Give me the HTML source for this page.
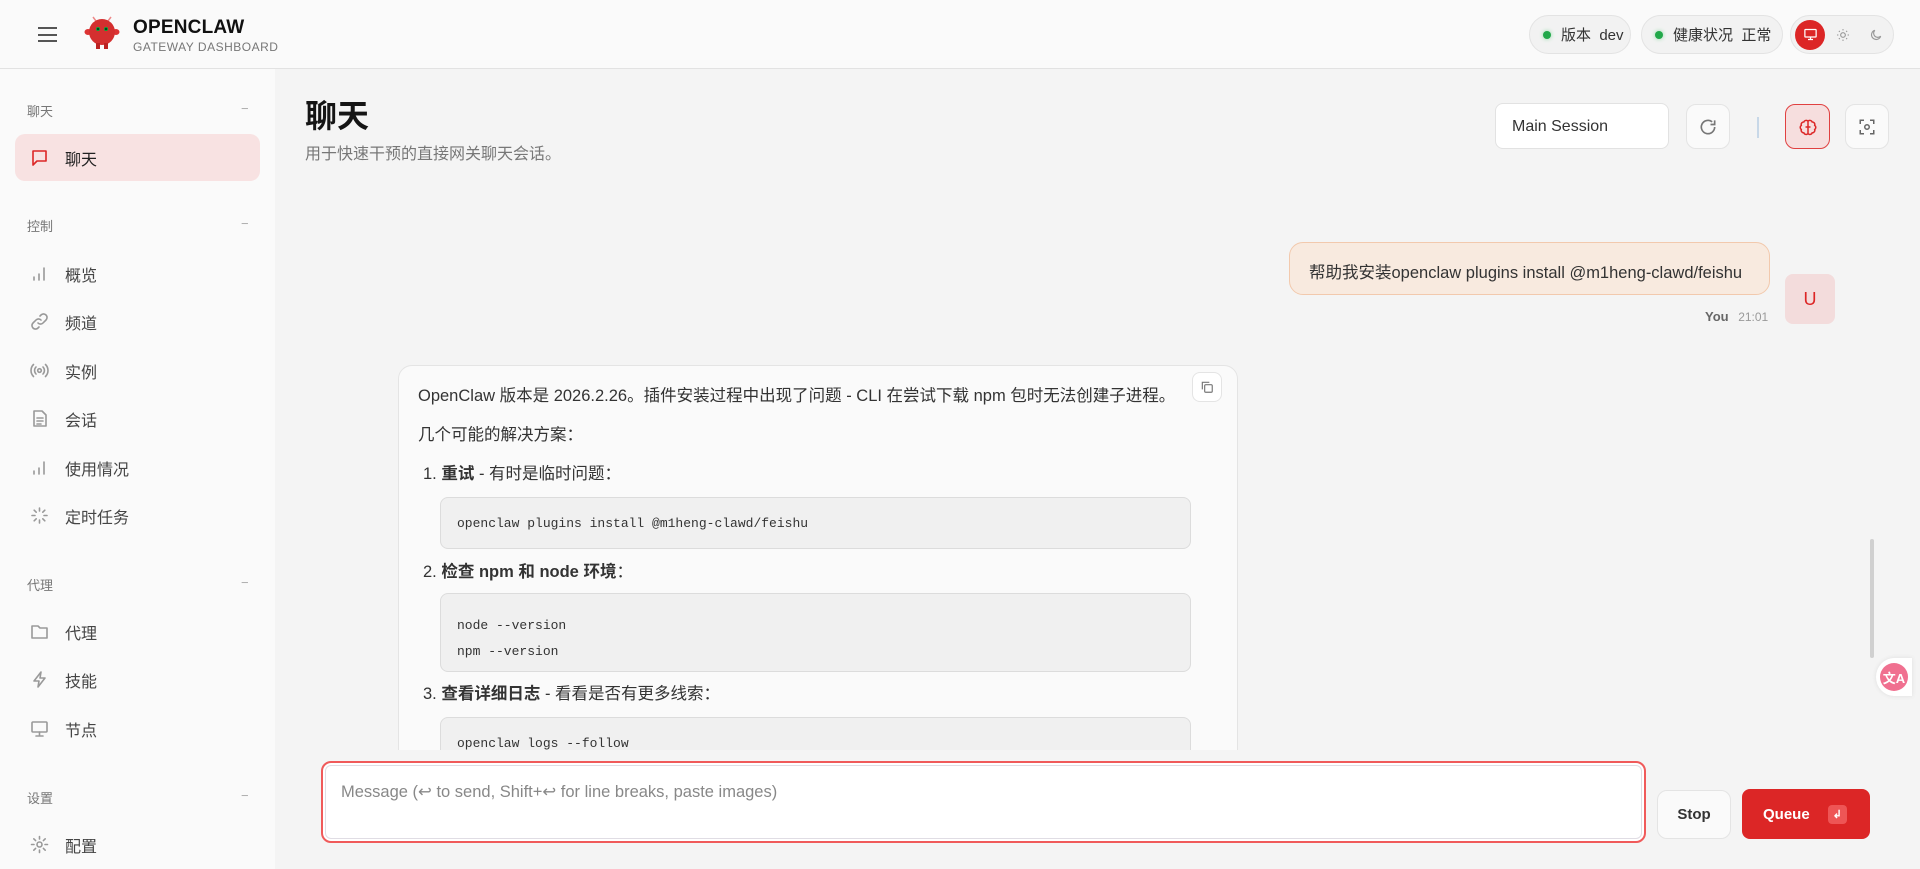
<!DOCTYPE html>
<html><head><meta charset="utf-8"><style>
*{box-sizing:border-box;margin:0;padding:0}
body{width:1920px;height:869px;overflow:hidden;background:#f4f4f4;font-family:"Liberation Sans","Noto Sans CJK SC",sans-serif;color:#222;position:relative}
.a{position:absolute}
.hdr{left:0;top:0;width:1920px;height:69px;background:#fafafa;border-bottom:1px solid #e2e2e2}
.side{left:0;top:69px;width:275px;height:800px;background:#fafafa}
.lbl{position:absolute;left:27px;font-size:13px;color:#777}
.lbl i{position:absolute;left:214px;font-style:normal;color:#aaa}
.it{position:absolute;left:15px;width:245px;height:47px;display:flex;align-items:center;font-size:16px;color:#444}
.it svg{margin-left:15px;margin-right:16px;width:19px;height:19px;fill:none;stroke:#999;stroke-width:1.6;stroke-linecap:round;stroke-linejoin:round}
.pill{top:15px;height:39px;border:1px solid #e3e3e3;border-radius:20px;background:#f2f2f2;display:flex;align-items:center;font-size:15px;color:#333}
.dot{width:8px;height:8px;border-radius:50%;background:#22a84a;margin:0 10px 0 13px;box-shadow:0 0 4px #8fd8a4}
.btn{background:#fafafa;border:1px solid #e4e4e4;border-radius:10px;display:flex;align-items:center;justify-content:center}
.code{position:absolute;left:440px;width:751px;background:#f0f0f0;border:1px solid #dcdcdc;border-radius:8px;font-family:"Liberation Mono",monospace;font-size:13px;color:#333;padding-left:16px}
.t{position:absolute;font-size:16.5px;color:#333;white-space:nowrap}
</style></head><body>
<div class="a hdr">
 <div class="a" style="left:38px;top:27px;width:19px;height:15px;border-top:2px solid #555;border-bottom:2px solid #555"><div style="margin-top:4.5px;height:2px;background:#555"></div></div>
 <svg class="a" style="left:84px;top:16px" width="36" height="34" viewBox="0 0 36 34"><line x1="12" y1="5" x2="9" y2="1" stroke="#e88" stroke-width="1.5"/><line x1="24" y1="5" x2="27" y2="1" stroke="#e88" stroke-width="1.5"/><ellipse cx="4" cy="16" rx="3.5" ry="3" fill="#d33"/><ellipse cx="32" cy="16" rx="3.5" ry="3" fill="#d33"/><circle cx="18" cy="16" r="13" fill="#d42f2f"/><rect x="12" y="27" width="4" height="6" fill="#b22"/><rect x="20" y="27" width="4" height="6" fill="#b22"/><circle cx="14" cy="13" r="2" fill="#0a3"/><circle cx="22" cy="13" r="2" fill="#0a3"/><circle cx="14" cy="13" r="1" fill="#022"/><circle cx="22" cy="13" r="1" fill="#022"/></svg>
 <div class="a" style="left:133px;top:17px;font-size:19px;font-weight:bold;color:#111;letter-spacing:.2px">OPENCLAW</div>
 <div class="a" style="left:133px;top:40px;font-size:12px;color:#777;letter-spacing:.5px">GATEWAY DASHBOARD</div>
 <div class="a pill" style="left:1529px;width:102px"><span class="dot"></span>版本&nbsp;&nbsp;dev</div>
 <div class="a pill" style="left:1641px;width:142px"><span class="dot"></span>健康状况&nbsp;&nbsp;正常</div>
 <div class="a pill" style="left:1790px;width:104px">
  <div style="width:30px;height:30px;border-radius:50%;background:#dc2626;margin-left:4px;display:flex;align-items:center;justify-content:center"><svg width="15" height="15" viewBox="0 0 24 24" fill="none" stroke="#fff" stroke-width="2"><rect x="3" y="4" width="18" height="12" rx="1"/><path d="M12 16v4M8 20h8"/></svg></div>
  <svg style="margin-left:11px" width="14" height="14" viewBox="0 0 24 24" fill="none" stroke="#999" stroke-width="2"><circle cx="12" cy="12" r="4"/><path d="M12 2v2M12 20v2M2 12h2M20 12h2M5 5l1.5 1.5M17.5 17.5L19 19M5 19l1.5-1.5M17.5 6.5L19 5"/></svg>
  <svg style="margin-left:19px" width="14" height="14" viewBox="0 0 24 24" fill="none" stroke="#999" stroke-width="2"><path d="M20 14A8 8 0 1 1 10 4a7 7 0 0 0 10 10z"/></svg>
 </div>
</div>
<div class="a side">
 <div class="lbl" style="top:32px">聊天<i>−</i></div>
 <div class="it" style="top:65px;background:#f8e2e2;border-radius:10px;color:#222"><svg style="stroke:#dc2626"><path d="M3 3h13v10H7l-4 4z"/></svg>聊天</div>
 <div class="lbl" style="top:147px">控制<i>−</i></div>
 <div class="it" style="top:181px"><svg><path d="M4 16v-3M9 16v-6M14 16V4"/></svg>概览</div>
 <div class="it" style="top:229px"><svg><path d="M8 11a3.5 3.5 0 0 0 5 0l3-3a3.5 3.5 0 0 0-5-5l-1 1M11 8a3.5 3.5 0 0 0-5 0l-3 3a3.5 3.5 0 0 0 5 5l1-1"/></svg>频道</div>
 <div class="it" style="top:278px"><svg><circle cx="9.5" cy="9.5" r="1.8"/><path d="M6 6a5 5 0 0 0 0 7M13 6a5 5 0 0 1 0 7M3.5 3.5a8.5 8.5 0 0 0 0 12M15.5 3.5a8.5 8.5 0 0 1 0 12"/></svg>实例</div>
 <div class="it" style="top:326px"><svg><path d="M4 2h8l4 4v11H4zM7 9h6M7 12h6M7 15h4"/></svg>会话</div>
 <div class="it" style="top:375px"><svg><path d="M4 16v-3M9 16v-6M14 16V4"/></svg>使用情况</div>
 <div class="it" style="top:423px"><svg><path d="M9.5 2v3M9.5 14v3M2 9.5h3M14 9.5h3M4.2 4.2l2 2M12.8 12.8l2 2M4.2 14.8l2-2M12.8 6.2l2-2"/></svg>定时任务</div>
 <div class="lbl" style="top:506px">代理<i>−</i></div>
 <div class="it" style="top:539px"><svg><path d="M2 4h6l2 2h7v10H2z"/></svg>代理</div>
 <div class="it" style="top:587px"><svg><path d="M11 2L4 11h5l-1 6 7-9h-5z"/></svg>技能</div>
 <div class="it" style="top:636px"><svg><rect x="2" y="3" width="15" height="10" rx="1"/><path d="M9.5 13v3M6 17h7"/></svg>节点</div>
 <div class="lbl" style="top:719px">设置<i>−</i></div>
 <div class="it" style="top:752px"><svg><circle cx="9.5" cy="9.5" r="2.5"/><path d="M9.5 1.5v2.5M9.5 15v2.5M1.5 9.5H4M15 9.5h2.5M3.8 3.8l1.8 1.8M13.4 13.4l1.8 1.8M3.8 15.2l1.8-1.8M13.4 5.6l1.8-1.8"/></svg>配置</div>
</div>

<div class="a" style="left:305px;top:91px;font-size:32px;font-weight:bold;color:#151515">聊天</div>
<div class="a" style="left:305px;top:140px;font-size:16px;color:#777">用于快速干预的直接网关聊天会话。</div>
<div class="a" style="left:1495px;top:103px;width:174px;height:46px;background:#fff;border:1px solid #e2e2e2;border-radius:8px;font-size:16px;color:#333;padding:14px 0 0 16px">Main Session</div>
<div class="a btn" style="left:1686px;top:104px;width:44px;height:45px"><svg width="20" height="20" viewBox="0 0 24 24" fill="none" stroke="#777" stroke-width="2"><path d="M20 12a8 8 0 1 1-3-6.2M20 4v5h-5"/></svg></div>
<div class="a" style="left:1757px;top:117px;width:2px;height:21px;background:#c8d8e8"></div>
<div class="a btn" style="left:1785px;top:104px;width:45px;height:45px;background:#f6dede;border-color:#e04040"><svg width="20" height="20" viewBox="0 0 24 24" fill="none" stroke="#dc2626" stroke-width="1.8"><path d="M12 4v16M12 5a3 3 0 0 0-5 1 3 3 0 0 0-3 4 3 3 0 0 0 0 5 3 3 0 0 0 3 4 3 3 0 0 0 5 1M12 5a3 3 0 0 1 5 1 3 3 0 0 1 3 4 3 3 0 0 1 0 5 3 3 0 0 1-3 4 3 3 0 0 1-5 1M9 12h6"/></svg></div>
<div class="a btn" style="left:1845px;top:104px;width:44px;height:45px"><svg width="18" height="18" viewBox="0 0 24 24" fill="none" stroke="#666" stroke-width="2"><path d="M3 8V3h5M16 3h5v5M21 16v5h-5M8 21H3v-5"/><circle cx="12" cy="12" r="3"/></svg></div>

<div class="a" style="left:1289px;top:242px;width:481px;height:53px;background:#f8eadf;border:1px solid #f2c9ad;border-radius:14px;font-size:16.5px;color:#333;padding:16px 0 0 19px;white-space:nowrap">帮助我安装openclaw plugins install @m1heng-clawd/feishu</div>
<div class="a" style="left:1785px;top:274px;width:50px;height:50px;background:#f3dcdc;border-radius:8px;color:#dc2626;font-size:18px;display:flex;align-items:center;justify-content:center">U</div>
<div class="a" style="left:1705px;top:309px;font-size:13px;color:#666;font-weight:bold">You <span style="font-weight:normal;color:#999;margin-left:6px;font-size:12px">21:01</span></div>

<div class="a" style="left:398px;top:365px;width:840px;height:420px;background:#fafafa;border:1px solid #e4e4e4;border-radius:14px"></div>
<div class="a btn" style="left:1192px;top:372px;width:30px;height:30px;border-radius:8px;background:#fff"><svg width="14" height="14" viewBox="0 0 24 24" fill="none" stroke="#777" stroke-width="2"><rect x="8" y="8" width="13" height="13" rx="2"/><path d="M4 16V4h12"/></svg></div>
<div class="t" style="left:418px;top:382px">OpenClaw 版本是 2026.2.26。插件安装过程中出现了问题 - CLI 在尝试下载 npm 包时无法创建子进程。</div>
<div class="t" style="left:418px;top:421px">几个可能的解决方案：</div>
<div class="t" style="left:423px;top:460px">1. <b>重试</b> - 有时是临时问题：</div>
<div class="code" style="top:497px;height:52px;padding-top:18px">openclaw plugins install @m1heng-clawd/feishu</div>
<div class="t" style="left:423px;top:558px">2. <b>检查 npm 和 node 环境</b>：</div>
<div class="code" style="top:593px;height:79px;padding-top:19px;line-height:26px">node --version<br>npm --version</div>
<div class="t" style="left:423px;top:680px">3. <b>查看详细日志</b> - 看看是否有更多线索：</div>
<div class="code" style="top:717px;height:60px;padding-top:18px">openclaw logs --follow</div>
<div class="a" style="left:275px;top:750px;width:1645px;height:119px;background:#f4f4f4"></div>

<div class="a" style="left:321px;top:761px;width:1325px;height:82px;border:2px solid #f05a5a;border-radius:10px;background:#fff;box-shadow:inset 0 0 0 2px #fff,inset 0 0 0 3px #e0dde4"></div>
<div class="a" style="left:341px;top:782px;font-size:16.5px;color:#888">Message (↩ to send, Shift+↩ for line breaks, paste images)</div>
<div class="a btn" style="left:1657px;top:790px;width:74px;height:49px;font-size:15px;font-weight:bold;color:#333">Stop</div>
<div class="a" style="left:1742px;top:789px;width:128px;height:50px;background:#dc2626;border-radius:8px;color:#fff;font-size:15px;font-weight:bold;display:flex;align-items:center;padding-left:21px">Queue<span style="margin-left:18px;width:19px;height:19px;background:#e55;border-radius:4px;font-size:11px;display:flex;align-items:center;justify-content:center">↲</span></div>

<div class="a" style="left:1870px;top:539px;width:4px;height:119px;background:#d0d0d0;border-radius:2px"></div>
<div class="a" style="left:1876px;top:658px;width:36px;height:38px;background:#fff;border-radius:50% 0 0 50%;box-shadow:0 0 4px #ddd;display:flex;align-items:center;justify-content:center"><div style="width:28px;height:28px;border-radius:50%;background:#f07090;color:#fff;font-size:13px;font-weight:bold;display:flex;align-items:center;justify-content:center">文A</div></div>
</body></html>
